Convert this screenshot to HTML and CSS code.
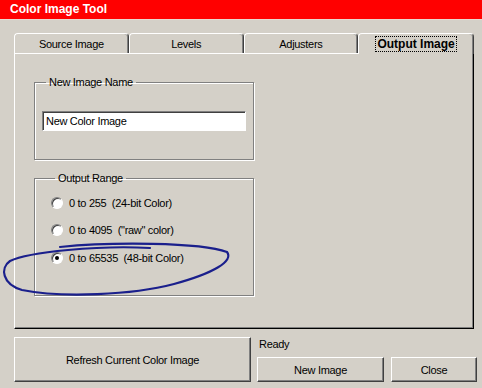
FILE: index.html
```html
<!DOCTYPE html>
<html lang="en">
<head>
    <meta charset="UTF-8">
    <title>Color Image Tool</title>
    <link rel="stylesheet" href="styles.css">
</head>
<body>
    <div class="titlebar">Color Image Tool</div>

    <div class="tabs-wrap">
        <div class="tabs">
            <div class="tab">Source Image</div>
            <div class="tab">Levels</div>
            <div class="tab">Adjusters</div>
            <div class="tab active"><span class="focus">Output Image</span></div>
        </div>
        <div class="panel">
            <fieldset class="group name-group">
                <legend>New Image Name</legend>
                <div class="textbox">New Color Image</div>
            </fieldset>
            <fieldset class="group range-group">
                <legend>Output Range</legend>
                <div class="option"><span class="radio"></span>0 to 255&nbsp; (24-bit Color)</div>
                <div class="option"><span class="radio"></span>0 to 4095&nbsp; ("raw" color)</div>
                <div class="option"><span class="radio checked"></span>0 to 65535&nbsp; (48-bit Color)</div>
            </fieldset>
        </div>
    </div>

    <div class="bottom">
        <div class="btn refresh">Refresh Current Color Image</div>
        <div class="side">
            <div class="status">Ready</div>
            <div class="side-btns">
                <div class="btn new">New Image</div>
                <div class="btn close">Close</div>
            </div>
        </div>
    </div>

    <!-- hand-drawn circle -->
    <svg class="scribble" width="240" height="70" viewBox="0 230 240 70">
        <path d="M 60 247 C 110 242, 200 242, 227 252 C 234 261, 214 273, 174 284 C 132 295, 62 298, 22 290 C 2 284, 0 268, 10 261 C 28 252, 100 245, 150 248"
              fill="none" stroke="#1a1f8c" stroke-width="2.2" stroke-linecap="round"/>
    </svg>
</body>
</html>
```

FILE: styles.css
```css
body {
    margin: 0;
    background: #d4d0c8;
    font-family: "Liberation Sans", Arial, sans-serif;
    font-size: 11px;
    letter-spacing: -0.3px;
    color: #000;
    width: 482px;
    height: 388px;
    position: relative;
    overflow: hidden;
}

.titlebar {
    height: 19px;
    line-height: 19px;
    background: #ff0000;
    color: #fff;
    font-weight: bold;
    font-size: 12px;
    letter-spacing: 0;
    padding-left: 10px;
    border-bottom: 1px solid #e8d8d0;
}

.tabs-wrap {
    margin: 13px 0 0 14px;
    width: 460px;
}

.tabs {
    display: flex;
    height: 20px;
}

.tab {
    width: 115px;
    box-sizing: border-box;
    border-top: 1px solid #fff;
    border-left: 1px solid #fff;
    border-right: 1px solid #404040;
    border-radius: 4px 4px 0 0;
    text-align: center;
    line-height: 20px;
    box-shadow: inset -1px 0 0 #808080;
}

.tab.active {
    width: 116px;
    font-weight: bold;
    font-size: 12px;
    letter-spacing: 0;
    position: relative;
    z-index: 1;
    background: #d4d0c8;
    height: 21px;
}

.focus {
    outline: 1px dotted #000;
    padding: 0 1px;
}

.panel {
    height: 276px;
    box-sizing: border-box;
    border-top: 1px solid #fff;
    border-left: 1px solid #fff;
    border-right: 1px solid #000;
    border-bottom: 1px solid #000;
    box-shadow: inset -1px -1px 0 #808080;
    padding: 22px 0 0 19px;
}

.group {
    width: 220px;
    box-sizing: border-box;
    margin: 0;
    border: 1px solid #808080;
    box-shadow: 1px 1px 0 #fff, inset 1px 1px 0 #fff;
    padding: 0 7px;
}

.group legend {
    padding: 0 3px;
    margin-left: 4px;
}

.name-group {
    height: 84px;
    padding-top: 23px;
}

.textbox {
    height: 20px;
    box-sizing: border-box;
    background: #fff;
    border-top: 1px solid #808080;
    border-left: 1px solid #808080;
    border-right: 1px solid #fff;
    border-bottom: 1px solid #fff;
    box-shadow: inset 1px 1px 0 #404040;
    padding-left: 3px;
    line-height: 18px;
}

.range-group {
    margin-top: 12px;
    height: 124px;
    padding: 5px 0 0 16px;
}

.option {
    display: flex;
    align-items: center;
    height: 27.5px;
}

.radio {
    width: 12px;
    height: 12px;
    box-sizing: border-box;
    border-radius: 50%;
    background: #fff;
    border: 1px solid;
    border-color: #808080 #fff #fff #808080;
    box-shadow: inset 1px 1px 0 #404040;
    margin-right: 6px;
    position: relative;
}

.radio.checked::after {
    content: "";
    position: absolute;
    left: 3px;
    top: 3px;
    width: 4px;
    height: 4px;
    border-radius: 50%;
    background: #000;
}

.bottom {
    display: flex;
    margin: 8px 0 0 14px;
}

.btn {
    box-sizing: border-box;
    border-top: 1px solid #fff;
    border-left: 1px solid #fff;
    border-right: 1px solid #404040;
    border-bottom: 1px solid #404040;
    box-shadow: inset -1px -1px 0 #808080;
    display: flex;
    align-items: center;
    justify-content: center;
}

.refresh {
    width: 237px;
    height: 45px;
}

.side {
    margin-left: 6px;
}

.status {
    height: 20px;
    line-height: 14px;
    padding-left: 2px;
}

.side-btns {
    display: flex;
    gap: 7px;
}

.new {
    width: 127px;
    height: 25px;
}

.close {
    width: 86px;
    height: 25px;
}

.scribble {
    position: absolute;
    left: 0;
    top: 230px;
}
```
